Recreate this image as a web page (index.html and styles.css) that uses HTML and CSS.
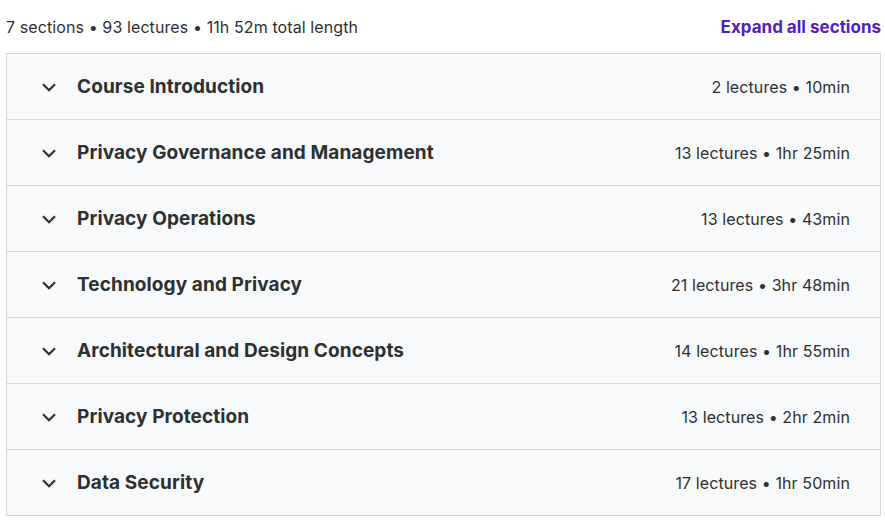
FILE: index.html
```html
<!DOCTYPE html>
<html lang="en">
  <head>
    <meta charset="UTF-8" />
    <meta name="viewport" content="width=device-width, initial-scale=1.0" />
    <title>Course content</title>
    <link rel="stylesheet" href="styles.css">
  </head>
  <body>
    <div class="curriculum">
      <!-- summary line -->
      <div class="summary">
        <span>7 sections • 93 lectures • 11h 52m total length</span>
        <button class="expand-all" type="button">Expand all sections</button>
      </div>

      <div class="sections">
        <div class="section">
          <span class="chevron"><svg width="16" height="16" viewBox="0 0 24 24"><path d="M3 8l9 9 9-9" fill="none" stroke="#2d2f31" stroke-width="3.2"/></svg></span>
          <span class="title">Course Introduction</span>
          <span class="meta">2 lectures • 10min</span>
        </div>
        <div class="section">
          <span class="chevron"><svg width="16" height="16" viewBox="0 0 24 24"><path d="M3 8l9 9 9-9" fill="none" stroke="#2d2f31" stroke-width="3.2"/></svg></span>
          <span class="title">Privacy Governance and Management</span>
          <span class="meta">13 lectures • 1hr 25min</span>
        </div>
        <div class="section">
          <span class="chevron"><svg width="16" height="16" viewBox="0 0 24 24"><path d="M3 8l9 9 9-9" fill="none" stroke="#2d2f31" stroke-width="3.2"/></svg></span>
          <span class="title">Privacy Operations</span>
          <span class="meta">13 lectures • 43min</span>
        </div>
        <div class="section">
          <span class="chevron"><svg width="16" height="16" viewBox="0 0 24 24"><path d="M3 8l9 9 9-9" fill="none" stroke="#2d2f31" stroke-width="3.2"/></svg></span>
          <span class="title">Technology and Privacy</span>
          <span class="meta">21 lectures • 3hr 48min</span>
        </div>
        <div class="section">
          <span class="chevron"><svg width="16" height="16" viewBox="0 0 24 24"><path d="M3 8l9 9 9-9" fill="none" stroke="#2d2f31" stroke-width="3.2"/></svg></span>
          <span class="title">Architectural and Design Concepts</span>
          <span class="meta">14 lectures • 1hr 55min</span>
        </div>
        <div class="section">
          <span class="chevron"><svg width="16" height="16" viewBox="0 0 24 24"><path d="M3 8l9 9 9-9" fill="none" stroke="#2d2f31" stroke-width="3.2"/></svg></span>
          <span class="title">Privacy Protection</span>
          <span class="meta">13 lectures • 2hr 2min</span>
        </div>
        <div class="section">
          <span class="chevron"><svg width="16" height="16" viewBox="0 0 24 24"><path d="M3 8l9 9 9-9" fill="none" stroke="#2d2f31" stroke-width="3.2"/></svg></span>
          <span class="title">Data Security</span>
          <span class="meta">17 lectures • 1hr 50min</span>
        </div>
      </div>
    </div>
  </body>
</html>
```

FILE: styles.css
```css
body {
  margin: 0;
  background: #fff;
  font-family: Inter, "Noto Sans", sans-serif;
  color: #2d2f31;
}

.curriculum {
  padding: 0 4px 0 6px;
}

.summary {
  display: flex;
  justify-content: space-between;
  align-items: center;
  height: 22px;
  padding-top: 16px;
  margin-bottom: 15px;
  font-size: 16px;
  letter-spacing: 0.1px;
  color: #2d2f31;
}

.expand-all {
  border: none;
  background: none;
  padding: 0;
  font-family: inherit;
  font-size: 17px;
  font-weight: 700;
  color: #5022c3;
  cursor: pointer;
}

.sections {
  border: 1px solid #d1d7dc;
  border-bottom: none;
}

.section {
  display: flex;
  align-items: center;
  height: 65px;
  padding: 0 30px 0 34px;
  background: #f7f9fa;
  border-bottom: 1px solid #d1d7dc;
}

.chevron {
  display: flex;
  width: 16px;
  margin-right: 20px;
}

.title {
  flex: 1;
  font-size: 19px;
  font-weight: 700;
  letter-spacing: 0.1px;
}

.meta {
  font-size: 16px;
  letter-spacing: 0.1px;
  color: #2d2f31;
}
```
